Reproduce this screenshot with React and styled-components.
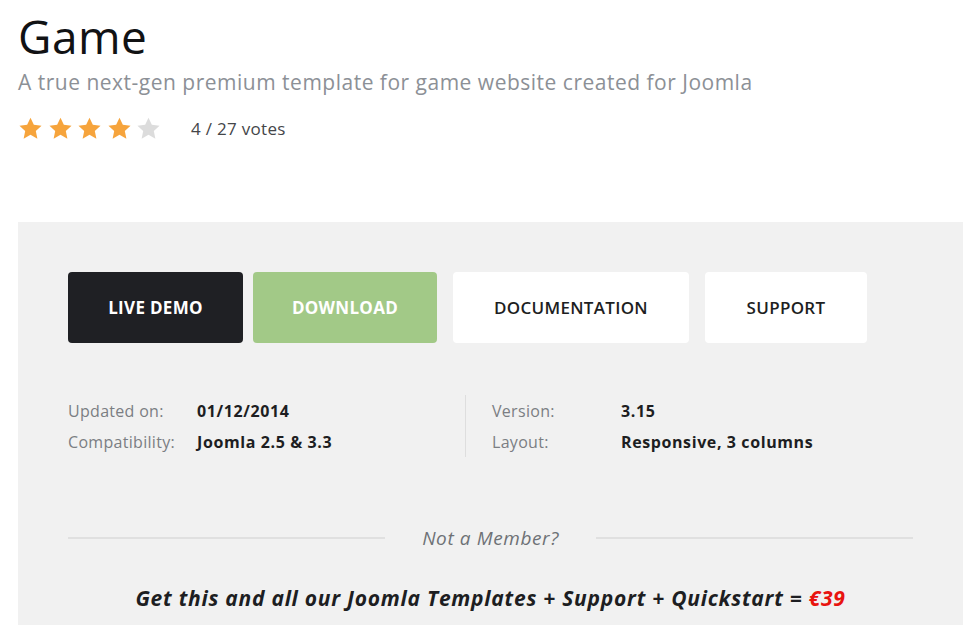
import React from 'react'
import styled, {createGlobalStyle} from 'styled-components'

const GlobalStyle = createGlobalStyle`
    html, body {
        margin: 0;
        padding: 0;
        background: #ffffff;
    }
    body {
        font-family: "Open Sans", Lato, "Liberation Sans", sans-serif;
        -webkit-font-smoothing: antialiased;
    }
`

const Star = ({filled}) => (
    <StarIcon viewBox="0 0 24 24" $filled={filled}>
        <path d="M12 1.6l3.2 6.9 7.4.8-5.5 5.1 1.5 7.4L12 18.1l-6.6 3.7 1.5-7.4-5.5-5.1 7.4-.8z"/>
    </StarIcon>
)

const Rating = ({value, votes}) => (
    <RatingRow>
        <Stars>
            {[1, 2, 3, 4, 5].map(i => <Star key={i} filled={i <= value}/>)}
        </Stars>
        <Votes>{value} / {votes} votes</Votes>
    </RatingRow>
)

const InfoColumn = ({rows, divided}) => (
    <Column $divided={divided}>
        {rows.map(([label, value]) => (
            <InfoRow key={label}>
                <Label>{label}</Label>
                <Value>{value}</Value>
            </InfoRow>
        ))}
    </Column>
)

export default function App() {
    return (
        <Page>
            <GlobalStyle/>
            <Header>
                <Title>Game</Title>
                <Subtitle>A true next-gen premium template for game website created for Joomla</Subtitle>
                <Rating value={4} votes={27}/>
            </Header>

            <Panel>
                <Buttons>
                    <Button $variant="dark" $width={175}>LIVE DEMO</Button>
                    <Button $variant="green" $width={184}>DOWNLOAD</Button>
                    <Button $variant="light" $width={236}>DOCUMENTATION</Button>
                    <Button $variant="light" $width={162}>SUPPORT</Button>
                </Buttons>

                <Info>
                    <InfoColumn rows={[
                        ['Updated on:', '01/12/2014'],
                        ['Compatibility:', 'Joomla 2.5 & 3.3'],
                    ]}/>
                    <InfoColumn divided rows={[
                        ['Version:', '3.15'],
                        ['Layout:', 'Responsive, 3 columns'],
                    ]}/>
                </Info>

                <Separator>
                    <Line/>
                    <SeparatorText>Not a Member?</SeparatorText>
                    <Line/>
                </Separator>

                <Offer>
                    Get this and all our Joomla Templates + Support + Quickstart = <Price>€39</Price>
                </Offer>
            </Panel>
        </Page>
    )
}

const Page = styled.div`
    padding: 0 17px 0 18px;
    height: 625px;
    overflow: hidden;
`

const Header = styled.div`
    display: flex;
    flex-direction: column;
    padding-top: 8px;
    height: 222px;
    box-sizing: border-box;
`

const Title = styled.h1`
    margin: 0;
    font-size: 46px;
    font-weight: 400;
    line-height: 56px;
    color: #111214;
    letter-spacing: 0.5px;
`

const Subtitle = styled.div`
    margin-top: 4px;
    font-size: 21px;
    line-height: 28px;
    color: #8c9096;
    letter-spacing: 0.5px;
`

const RatingRow = styled.div`
    display: flex;
    align-items: center;
    margin-top: 20px;
`

const Stars = styled.div`
    display: flex;
    gap: 4.5px;
`

const StarIcon = styled.svg`
    width: 25px;
    height: 25px;
    fill: ${props => props.$filled ? '#f6a43c' : '#dcdcdc'};
`

const Votes = styled.div`
    margin-left: 30px;
    font-size: 17px;
    color: #444649;
    letter-spacing: 0.3px;
`

const Panel = styled.div`
    background: #f1f1f1;
    padding: 50px 50px 0;
    height: 403px;
    box-sizing: border-box;
`

const Buttons = styled.div`
    display: flex;
    gap: 16px;
`

const buttonColors = {
    dark: {bg: '#1f2024', fg: '#ffffff', weight: 700},
    green: {bg: '#a2c987', fg: '#ffffff', weight: 700},
    light: {bg: '#ffffff', fg: '#1d1e22', weight: 600},
}

const Button = styled.div`
    display: flex;
    align-items: center;
    justify-content: center;
    width: ${props => props.$width}px;
    height: 71px;
    border-radius: 4px;
    background: ${props => buttonColors[props.$variant].bg};
    color: ${props => buttonColors[props.$variant].fg};
    font-weight: ${props => buttonColors[props.$variant].weight};
    font-size: 17px;
    letter-spacing: 0.3px;
    &:first-child {
        margin-right: -6px;
    }
`

const Info = styled.div`
    display: flex;
    margin-top: 52px;
`

const Column = styled.div`
    display: flex;
    flex-direction: column;
    gap: 9px;
    width: ${props => props.$divided ? 'auto' : '397px'};
    padding: ${props => props.$divided ? '0 0 0 26px' : '0'};
    border-left: ${props => props.$divided ? '1px solid #dedede' : 'none'};
    height: 62px;
    justify-content: center;
`

const InfoRow = styled.div`
    display: flex;
    font-size: 16px;
    line-height: 22px;
`

const Label = styled.div`
    width: 129px;
    color: #7b7e83;
    letter-spacing: 0.3px;
`

const Value = styled.div`
    font-weight: 700;
    color: #1d1e22;
    letter-spacing: 0.6px;
`

const Separator = styled.div`
    display: flex;
    align-items: center;
    margin-top: 68px;
`

const Line = styled.div`
    flex: 1;
    height: 2px;
    background: #e0e0e0;
`

const SeparatorText = styled.div`
    padding: 0 37px;
    font-size: 19px;
    font-style: italic;
    color: #6e7176;
    letter-spacing: 0.6px;
`

const Offer = styled.div`
    margin-top: 33px;
    text-align: center;
    font-size: 21px;
    font-weight: 700;
    font-style: italic;
    color: #1d1e22;
    letter-spacing: 0.75px;
`

const Price = styled.span`
    color: #e8140f;
`
